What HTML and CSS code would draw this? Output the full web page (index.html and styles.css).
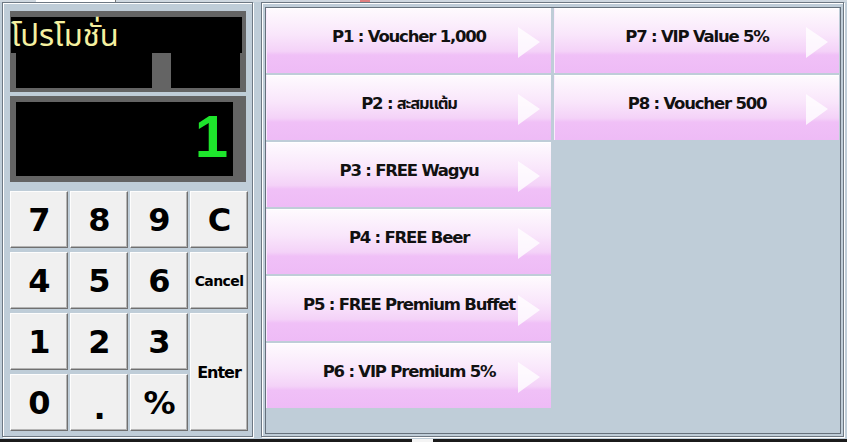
FILE: index.html
```html
<!DOCTYPE html>
<html lang="th">
<head>
<meta charset="UTF-8">
<title>Promotion</title>
<link rel="stylesheet" href="styles.css">
</head>
<body>
<div class="screen">
	<div class="tabs">
		<span class="tab"></span>
		<span class="tab-mark"></span>
	</div>
	<div class="main">
		<section class="pad-panel">
			<div class="lcd lcd-title">
				<div class="lcd-box wide"></div>
				<div class="lcd-box narrow"></div>
				<span class="lcd-label">โปรโมชั่น</span>
			</div>
			<div class="lcd lcd-qty">
				<div class="qty">1</div>
			</div>
			<div class="keypad">
				<button class="key">7</button>
				<button class="key">8</button>
				<button class="key">9</button>
				<button class="key">C</button>
				<button class="key">4</button>
				<button class="key">5</button>
				<button class="key">6</button>
				<button class="key small">Cancel</button>
				<button class="key">1</button>
				<button class="key">2</button>
				<button class="key">3</button>
				<button class="key enter">Enter</button>
				<button class="key">0</button>
				<button class="key dot">.</button>
				<button class="key">%</button>
			</div>
		</section>
		<section class="promo-panel">
			<div class="promo-list">
				<button class="promo">P1 : Voucher 1,000</button>
				<button class="promo">P2 : สะสมแต้ม</button>
				<button class="promo">P3 : FREE Wagyu</button>
				<button class="promo">P4 : FREE Beer</button>
				<button class="promo">P5 : FREE Premium Buffet</button>
				<button class="promo">P6 : VIP Premium 5%</button>
				<button class="promo">P7 : VIP Value 5%</button>
				<button class="promo">P8 : Voucher 500</button>
			</div>
		</section>
	</div>
	<div class="taskbar">
		<span class="task"></span>
	</div>
</div>
</body>
</html>
```

FILE: styles.css
```css
body {
	margin: 0;
	background: #bfcdd8;
	font-family: "DejaVu Sans", "Noto Sans", sans-serif;
}
button {
	margin: 0;
	padding: 0;
	font: inherit;
	cursor: pointer;
}
.screen {
	width: 847px;
	height: 442px;
	display: flex;
	flex-direction: column;
	overflow: hidden;
}

/* bits of the tab strip above */
.tabs {
	height: 2px;
	display: flex;
	background: #cfd8e0;
}
.tab {
	margin-left: 36px;
	width: 79px;
	background: #fff;
	border-right: 1px solid #777;
}
.tab-mark {
	margin-left: 244px;
	width: 10px;
	background: #e08080;
}

.main {
	flex: 1;
	display: flex;
	padding: 0 0 2px 2px;
}

/* left: displays + keypad */
.pad-panel {
	width: 251px;
	box-sizing: border-box;
	border: 1px solid #6d7883;
	box-shadow: 1px 1px 0 #fff, inset 1px 1px 0 #fff;
	padding: 8px 0 0 7px;
}
.lcd {
	width: 236px;
	box-sizing: border-box;
	background: #646464;
}
.lcd-title {
	position: relative;
	height: 81px;
	padding: 6px 6px 4px;
	display: flex;
	gap: 19px;
}
.lcd-box {
	background: #000;
}
.lcd-box.wide {
	width: 136px;
}
.lcd-box.narrow {
	width: 69px;
}
.lcd-label {
	position: absolute;
	left: 1px;
	top: 6px;
	width: 231px;
	height: 36px;
	background: #000;
	color: #f5f0a0;
	font: 31px/40px "Noto Sans Thai", "Loma", "Garuda", "DejaVu Sans", sans-serif;
	white-space: nowrap;
}
.lcd-qty {
	margin-top: 4px;
	height: 86px;
	padding: 6px 13px 6px 6px;
}
.qty {
	height: 100%;
	background: #000;
	color: #1ee52c;
	text-align: right;
	padding-right: 5px;
	font: bold 60px/70px "Liberation Sans", sans-serif;
	box-sizing: border-box;
}

.keypad {
	margin-top: 9px;
	display: grid;
	grid-template-columns: repeat(4, 58px);
	grid-template-rows: repeat(4, 57px);
	gap: 4px 2px;
}
.key {
	background: #f0f0f0;
	border: 1px solid;
	border-color: #fdfdfd #707070 #707070 #fdfdfd;
	box-shadow: inset -1px -1px 0 #b4b4b4;
	color: #000;
	font-size: 32px;
	font-weight: bold;
	letter-spacing: -1px;
}
.key.small {
	font-size: 14px;
	letter-spacing: -0.6px;
}
.key.enter {
	grid-column: 4;
	grid-row: 3 / span 2;
	font-size: 16px;
	letter-spacing: -1px;
}
.key.dot {
	padding-top: 10px;
}

/* right: promotion buttons */
.promo-panel {
	margin-left: 8px;
	width: 583px;
	box-sizing: border-box;
	border: 1px solid #6d7883;
	box-shadow: 1px 1px 0 #fff, inset 1px 1px 0 #fff;
	padding: 4px 2px 2px 3px;
	display: flex;
}
.promo-list {
	flex: 1;
	border: 1px solid #66717c;
	display: grid;
	grid-auto-flow: column;
	grid-template-columns: 285px 285px;
	grid-template-rows: repeat(6, 65px);
	gap: 2px 3px;
	align-content: start;
}
.promo {
	position: relative;
	border: 0;
	border-top: 1px solid #fff;
	border-left: 1px solid #fbeafd;
	background: linear-gradient(#fefafe 0%, #f9e6fb 40%, #f4d2f8 66%, #f0c0f7 72%, #eebbf6 100%);
	color: #111;
	font-size: 16.5px;
	font-weight: bold;
	letter-spacing: -1.2px;
	padding-bottom: 9px;
	font-family: "DejaVu Sans", "Noto Sans Thai", "Loma", sans-serif;
}
.promo::after {
	content: "";
	position: absolute;
	right: 11px;
	top: 18px;
	border-left: 22px solid rgba(255, 255, 255, 0.78);
	border-top: 15px solid transparent;
	border-bottom: 16px solid transparent;
}

.taskbar {
	height: 3px;
	background: #1b1b1b;
	display: flex;
}
.task {
	margin-left: 412px;
	width: 21px;
	background: #f4f4f4;
}
```
